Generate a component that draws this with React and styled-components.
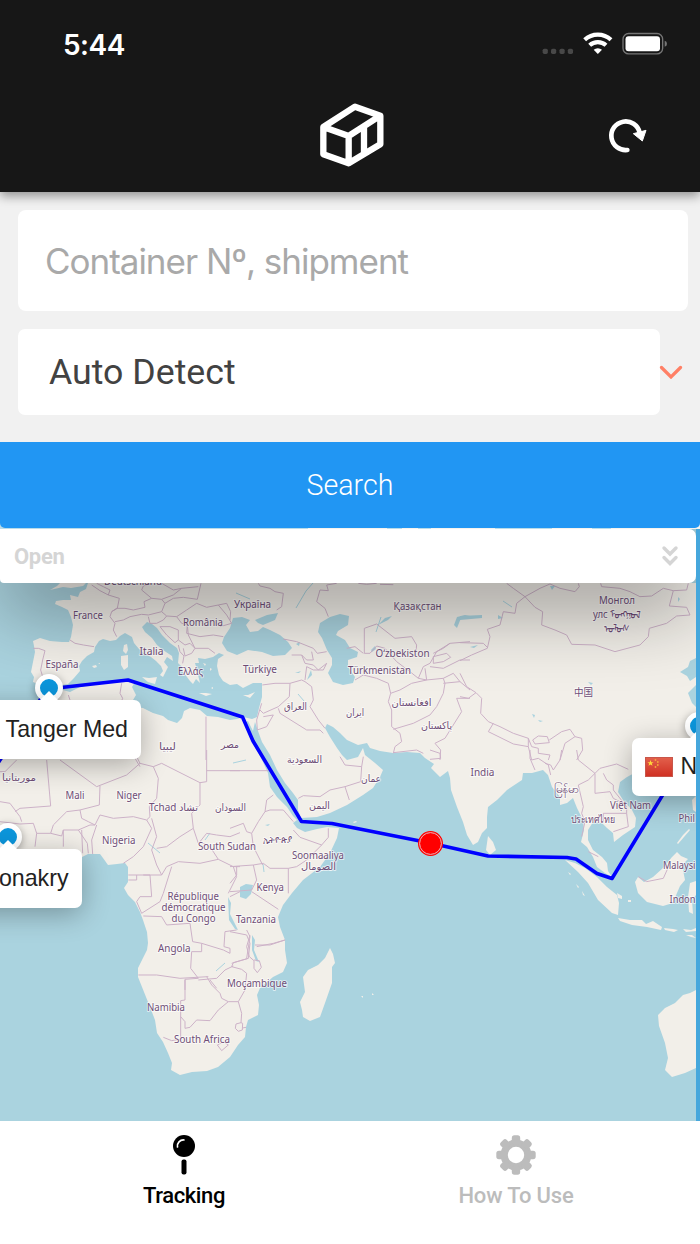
import React from 'react'
import styled, { createGlobalStyle } from 'styled-components';

const land = [
  // Europe, Asia and Africa
  'M88 583L86 589L80 592L78 597L70 595L71 600L63 600L56 601L55 604L62 607L68 610L71 617L73 625L71 637L69 642L62 642L50 641L40 638L33 641L34 646L35 652L33 662L31 672L34 677L33 682L38 684L48 688L55 686L68 684L74 678L80 671L79 666L82 661L87 656L94 652L95 647L99 641L103 639L110 641L116 640L120 636L125 633L132 637L134 643L139 649L145 654L151 657L156 661L161 666L163 671L160 675L163 677L166 671L168 667L164 662L167 657L173 661L172 656L163 650L157 645L152 638L145 632L142 627L147 622L152 624L157 628L162 635L170 643L177 648L179 653L178 663L182 667L183 672L187 677L190 681L193 684L196 679L200 683L198 675L203 674L197 670L195 663L199 663L198 658L205 659L213 657L219 653L224 655L218 659L217 666L219 675L223 681L230 685L237 684L243 688L253 683L262 683L262 697L259 708L257 717L252 719L243 717L237 719L230 720L218 717L207 716L200 710L190 708L184 711L182 718L177 723L168 720L163 716L153 713L143 708L135 707L133 700L136 695L132 687L135 682L130 680L123 682L113 682L100 683L80 687L70 692L63 690L50 693L42 700L30 712L20 725L15 740L0 755L-10 770L-10 845L20 862L50 872L66 862L82 857L88 854L100 854L103 858L108 865L117 864L125 863L128 867L128 875L128 882L124 888L128 895L135 902L140 912L143 920L147 932L148 943L147 950L143 958L138 968L138 977L142 987L150 1007L155 1020L157 1033L163 1042L168 1053L172 1063L171 1070L180 1075L192 1072L207 1071L218 1067L230 1057L238 1045L245 1037L246 1027L248 1020L258 1015L259 1005L257 995L260 988L273 977L283 972L287 963L285 950L285 940L280 927L278 917L283 905L292 893L303 880L320 867L330 853L337 838L339 828L327 827L317 829L305 832L297 828L293 823L297 820L293 816L287 807L277 797L270 787L268 773L262 760L256 748L249 735L244 723L248 721L253 731L255 722L258 731L262 742L270 755L277 770L285 783L293 793L298 800L298 810L301 818L317 817L330 813L347 805L363 795L373 788L380 777L383 770L375 763L365 755L363 748L358 757L347 760L342 755L337 748L330 737L325 728L327 724L333 727L340 733L347 740L358 745L367 743L370 748L380 751L393 753L407 752L420 753L425 758L434 764L431 768L440 777L448 771L450 778L451 790L457 807L463 822L467 835L473 845L478 842L482 833L487 828L487 817L488 807L497 800L507 790L522 780L523 773L532 773L543 770L548 775L552 787L560 797L560 805L567 803L573 798L577 808L583 820L584 830L581 842L587 847L593 857L597 867L605 873L612 877L608 871L607 863L602 857L593 850L588 840L588 830L593 822L602 823L607 828L613 833L614 842L623 835L635 827L636 818L632 810L623 800L618 792L620 782L627 777L640 770L670 762L696 748L696 707L692 703L688 693L696 685L696 677L690 681L687 676L680 672L688 667L690 661L696 658L696 583Z',
  // Great Britain
  'M50 590L57 586L60 583L86 583L83 586L71 588L63 587Z',
  // Mediterranean islands
  'M124 645L127 644L128 650L126 654L123 651Z', 'M121 656L128 655L128 667L124 670L121 665Z',
  'M142 677L149 678L157 677L155 684L148 682Z', 'M199 693L206 693L212 694L206 696Z', 'M243 695L248 695L255 692L250 698Z',
  'M92 666l4 -1l1 2l-3 1Z', 'M98 663l2 0l0 1Z', 'M203 663l3 1l-1 2Z', 'M210 668l2 1l-2 2Z', 'M211 688l2 -1l0 2Z',
  // Madagascar and Sri Lanka
  'M330 948L333 954L335 963L332 967L332 983L325 1003L320 1017L310 1021L303 1017L302 1010L300 1002L305 992L303 977L308 970L318 965L325 958Z',
  'M488 836L493 842L496 850L490 855L486 850Z',
  // Indonesia
  'M565 860L575 863L585 868L597 877L607 887L617 895L619 903L618 915L612 913L598 900L588 883L578 872Z',
  'M618 918L630 920L642 920L646 924L653 921L662 927L661 930L647 927L632 925L620 921Z',
  'M664 928l9 1l5 1l-4 2l-9 -2Z', 'M683 929l8 1l5 -2v3l-10 1Z', 'M686 935l6 0l4 3l-5 -1Z',
  'M677 852L681 856L688 859L682 865L685 880L680 886L677 893L673 903L663 906L647 902L638 893L635 882L638 877L644 882L653 877L663 868L672 857Z',
  'M690 883L696 881L696 895L692 900L693 914L689 912L688 897Z', 'M677 843l6 -8l6 -6l1 1l-6 7l-6 7Z', 'M692 800l4 -4v16l-3 -2Z',
  'M617 893l5 3l0 3l-4 -1Z', 'M628 900l3 0l0 2l-3 0Z', 'M568 872l3 2l-1 1Z', 'M576 884l3 3l-1 1Z', 'M582 891l3 5l-2 -1Z',
  // Australia
  'M696 990L690 993L683 995L675 1003L665 1008L658 1015L659 1026L665 1043L668 1058L665 1070L672 1077L685 1073L696 1068Z',
  'M353 822l3 -1l1 1l-3 1Z', 'M361 996l2 0l0 2Z', 'M372 993l2 2l-2 0Z',
];

const water = [
  'M233 618L230 628L224 637L222 643L227 651L237 655L248 650L262 652L273 656L285 655L292 648L288 642L280 635L270 630L263 627L258 631L250 632L246 625L250 620L242 617Z',
  'M255 620L267 615L278 613L275 620L263 625L258 623Z',
  'M330 617L340 614L349 616L348 625L338 631L336 635L345 640L350 648L358 652L357 657L348 660L348 667L355 677L353 683L343 685L333 682L328 673L332 665L332 658L327 650L322 638L318 632L320 623Z',
  'M240 887L246 884L253 885L251 894L246 899L240 897Z',
  'M228 897L231 903L230 914L238 930L235 929L229 920Z',
  'M252 935L255 940L254 950L259 962L256 961L252 950Z',
  'M454 625L457 617L465 615L470 616L461 618L457 628Z',
  'M371 650l4 -4l1 3l-4 3Z', 'M385 618l7 -2l-4 4l-10 5Z', 'M460 616l22 -1v3l-22 2Z', 'M550 586l5 0l-3 4Z',
  'M503 618l-5 -3l0 4Z', 'M296 644l4 -2l-1 4Z', 'M307 680l4 -10l1 5Z', 'M295 673l6 -2l-2 2Z', 'M588 682l5 1l-2 2Z', 'M470 647l8 -2l-4 3Z',
  'M265 825l5 -1l-2 2Z', 'M678 597l2 2l-2 3Z', 'M532 714l3 1l-1 3Z', 'M538 720l5 1l-3 1Z',
];

const rivers = 'M296 608L306 591L313 583M236 593L250 599M376 632L381 617M298 694L304 701M503 601L512 607M263 864L264 872M216 971L225 963M148 843L160 853M233 763L246 760M210 833L205 840';

// country borders, digitised per sheet at three units to the pixel
const sheets = [
  { x: 0, y: 520, d: 'M100 385L115 385L135 392L128 420L122 450L128 470L120 490M210 360L225 370L250 375L282 380M275 195L300 212L325 225L358 235L352 265L335 275L330 290L345 310L340 330L350 350M290 190L310 200L330 210L325 225M335 275L350 265L375 265L400 270L435 262L432 245L455 235L485 238L495 250L485 275L445 285L425 283L390 290L370 300L345 305M455 235L425 210L430 198L455 190M485 190L520 210L545 205L595 200M485 238L520 225L545 205M495 250L520 235L550 232L592 238L603 190M485 275L500 288L530 290L560 270L590 250L620 262L655 255L680 285L695 310L660 320M530 290L545 310L562 315L560 340L600 350L640 345L670 350M445 290L450 310L470 310L490 300L500 288M480 320L510 320L535 330L535 360L525 368L500 345ZM535 360L555 375L570 370L585 385L575 400L555 408L550 385M562 315L565 345L585 385L625 385L645 400M535 375L540 395L552 408L548 430M655 255L680 250L692 275L690 300M365 490L360 520L368 535L362 550M205 525L210 540M618 590L618 720M405 715L420 740' },
  { x: 230, y: 520, d: 'M85 190L90 198L120 205L135 215L160 220L155 260L140 270M320 190L290 195L295 212L270 210L260 245L285 265L295 290M385 190L410 193L440 190M450 193L490 194M160 357L200 365L250 385L262 400L290 395M185 405L215 405L230 420L250 420L245 395M215 405L225 430L250 435L265 450L290 430L280 450L250 450L230 440L225 480M97 495L135 490L180 490L215 480L225 485M180 490L178 530L145 560L100 580L90 570M145 565L150 580L230 630L270 630L280 640M100 590L130 585L110 620L82 630L80 600L95 550M225 485L245 500L250 540L240 560L265 600L285 625M403 400L403 325L440 312L495 355L545 350L560 375L558 395M403 400L420 400L440 378L465 385L500 425L540 455L565 475L590 480M350 385L375 380L400 400M375 480L400 465L440 475L475 490L482 520M482 520L475 545L485 570L485 620L510 640L515 665L495 680L490 700M482 520L510 510L545 490L590 480L640 475L645 490L640 520L620 560L600 585L550 610L490 628M565 475L580 440L600 430L620 395L660 370L720 365M600 440L640 445L690 420L720 420M610 410L650 400L662 412L640 425L610 430ZM590 480L585 445M660 370L640 385L610 400M720 535L680 535L695 575L670 615L645 655L615 670L632 690L630 720M640 490L690 485L720 510M640 475L670 460L690 485' },
  { x: 460, y: 520, d: 'M140 190L160 205L195 230L240 205L270 192L300 205L345 215L358 200L355 190M195 230L170 250L165 280L130 275L120 315L82 328L90 350L82 385L35 405L0 422M0 368L70 370L82 382M195 230L225 262L248 275L245 315L285 330L320 345L335 373L405 375L465 395L540 375L565 350L568 325L620 310L650 288L690 285L680 262L628 258L640 212L610 205L575 228L540 230L510 215L480 205L425 200L422 190M640 212L680 210L685 190M0 460L20 500L48 518L65 535L62 580L85 605L120 620L160 640L205 655L205 680L160 672L85 635L100 610M0 530L25 535L48 518M218 660L235 648L262 650L268 668L225 672ZM268 660L305 635L330 628L345 650L365 655L368 690L350 720M345 650L315 670L300 720M205 680L215 720M205 655L215 680L235 685L235 700L270 705L265 720' },
  { x: 0, y: 750, d: 'M0 65L15 65L50 30M140 30L152 168L60 175L45 185M0 155L30 160L60 200L65 215M0 215L60 222L100 220L110 250L105 290M180 30L290 110L380 75L420 40L405 10M420 40L460 50L485 40L600 98L600 165L575 190L580 235L595 280M300 108L298 165L240 180L200 185L160 225L152 250L110 250M152 250L185 258L190 240L235 240M240 180L245 205L265 215L285 225M190 240L190 290M245 240L248 310M235 240L262 280L265 310M290 225L275 270L278 312M235 240L270 225L285 225L300 195L340 205L400 200L440 210L450 200L448 170L470 145L475 85L460 50M440 210L455 235L430 290L400 320L370 340M455 205L470 260L455 300L470 345L485 375L385 375M580 235L540 260L500 290L470 295M485 375L500 350L535 335L600 340L655 328L630 290L600 275M655 328L700 350L720 350M385 390L410 390L410 375M430 375L450 375L455 440L420 440L410 455L425 490M515 350L490 430L480 455L425 490M430 498L485 500L500 525L570 520L578 575L605 580L605 605L575 605L572 655L595 685M415 675L470 675L540 685L625 680M605 580L670 600L690 610L690 595L672 590L675 545L710 540M620 0L620 95L600 98M620 62L720 62M600 275L620 250L650 255L690 260L720 248M700 350L710 380L685 430M690 440L720 425M555 720L555 688L595 685M630 690L650 715' },
  { x: 230, y: 750, d: 'M0 62L115 62M130 135L110 150L105 185L85 215L65 250L70 290L98 345M105 185L120 180L160 180L190 215M0 235L40 220L50 245L65 250M190 240L210 262L275 285L295 262L295 235M275 285L230 330L200 350L175 355L175 430M0 350L70 345L100 340L120 355L175 355M70 345L80 390L65 420L0 425M20 350L20 375L0 400M65 425L145 478M80 590L130 580L165 570M0 545L50 555L60 580L55 625L5 640M205 145L220 137L270 140L300 120L345 110L358 150M345 110L392 95L395 50L345 45L330 20M395 50L400 20M490 8L560 0M560 0L580 10M600 0L630 10L632 25L600 28' },
  { x: 460, y: 750, d: 'M210 0L210 25L225 60M215 30L235 25L265 45L272 75M305 0L300 30L280 60L272 45L255 40M350 0L355 30L405 70L385 90L355 105L370 170L365 190L375 215L365 260M405 70L420 55L470 42L505 58M405 70L405 130L450 125L460 145L480 155M430 70L440 90L460 105L460 120L500 170L500 190L430 190L430 215M500 190L505 230L460 245M385 305L415 320M535 380L560 395L610 385L628 345' },
  { x: 130, y: 930, d: 'M205 150L260 145L285 120L310 108M165 150L165 210L152 212L152 325M152 260L165 275L165 295L180 292L200 270L240 272L265 240L295 215L325 215L345 180L350 130L335 118L305 110L310 98L355 85M230 140L245 165L270 190L275 205L295 215M325 215L335 250L333 278M333 278L318 282L316 295L325 304L337 300L338 280ZM348 292L338 294M262 345L280 335L295 345L275 362ZM100 322L125 332L150 328M350 0L360 20L350 85M360 15L350 50L358 80L372 92L372 115L382 128L394 112L388 92L372 90M375 45L420 45L465 30' },
];

// [text, left, baseline, width]
const labels = [
  ['Deutschland', 104, 584.5, 58], ['France', 73, 618.5, 30], ['România', 183, 625.5, 40], ['Italia', 139.5, 655, 24],
  ['España', 45.5, 667.5, 33], ['Ελλάς', 178, 674.5, 25], ['Україна', 234, 607.5, 37], ['Қазақстан', 393.5, 610, 48],
  ["Oʻzbekiston", 375.5, 657, 54], ['Türkiye', 243, 673, 34], ['Türkmenistan', 348, 673.5, 63],
  ['العراق', 284, 710, 23], ['ایران', 346, 715.5, 18], ['افغانستان', 391.5, 706, 40], ['پاکستان', 421, 728.5, 31],
  ['Монгол', 599, 604, 36], ['улс ᠮᠣᠩᠭᠣᠯ', 593, 618, 48], ['ᠤᠯᠤᠰ', 604, 632, 26], ['中国', 574, 695.5, 19],
  ['ليبيا', 159, 750, 17], ['مصر', 221, 747.5, 18], ['موريتانيا', 2, 780.5, 34], ['Mali', 65.5, 799, 19], ['Niger', 116.5, 799, 25],
  ['Tchad تشاد', 149, 810.5, 49], ['السودان', 215, 810.5, 31], ['Nigeria', 102, 844, 33.5], ['South Sudan', 198, 850, 58],
  ['ኢትዮጵያ', 263, 843, 29], ['السعودية', 287, 763, 35], ['عمان', 361, 782, 20], ['اليمن', 309, 809, 21],
  ['Soomaaliya', 292, 858.5, 52], ['الصومال', 301, 869.5, 35], ['Kenya', 256.5, 891, 27.5], ['Tanzania', 236, 922.5, 40],
  ['République', 167.5, 900, 51.5], ['démocratique', 161.5, 910.5, 64], ['du Congo', 171.5, 921.5, 44], ['Angola', 158, 951.5, 32.5],
  ['Moçambique', 227, 987, 60], ['Namibia', 147, 1010.5, 38], ['South Africa', 174, 1042.5, 56],
  ['India', 470.5, 776, 24], ['မြန်မာ', 554, 793, 25], ['Việt Nam', 610, 809, 41], ['ประเทศไทย', 571, 823, 44],
  ['Phil', 678.5, 821.5, 16.5], ['Malaysi', 663, 868.5, 32.5], ['Indon', 669.5, 903, 26],
];

function MapTiles() {
  return (
    <Tiles viewBox="0 529 696 592">
      {land.map((d) => <path key={d} d={d} fill="#f2efe9" />)}
      {water.map((d) => <path key={d} d={d} fill="#aad3df" />)}
      <path d={rivers} fill="none" stroke="#aad3df" strokeWidth="1" />
      {sheets.map(({ x, y, d }) => (
        <path key={`${x}-${y}`} d={d} transform={`translate(${x} ${y}) scale(.3333)`} fill="none" stroke="#cdb2c8" strokeWidth="3" strokeLinejoin="round" />
      ))}
      {labels.map(([text, x, y, width]) => (
        <Label key={text} x={x} y={y} textLength={width} lengthAdjust="spacingAndGlyphs">{text}</Label>
      ))}
    </Tiles>
  )
}

function Route() {
  return (
    <Tiles viewBox="0 529 696 592">
      <path d="M-2 763L42 697L48 689L128 680L242.5 717L253 741L301.500 821.500L332 823.500L430 843L488 856L567 857.500L576 859L597 873.500L612 878.500L696 740" fill="none" stroke="#0000ff" strokeWidth="3.6" strokeLinejoin="round" />
      <circle cx="430.500" cy="843.500" r="11.700" fill="#f00" stroke="#f00" strokeWidth="1.600" />
      <circle cx="430.500" cy="843.500" r="10.900" fill="none" stroke="#e9b6bd" strokeWidth="1" />
    </Tiles>
  )
}

const teeth = [0, 45, 90, 135, 180, 225, 270, 315];

function Gear() {
  return (
    <svg width="40" height="40" viewBox="-20 -20 40 40">
      <circle r="11.800" fill="none" stroke="#bcbcbc" strokeWidth="7.200" />
      {teeth.map((a) => <rect key={a} x="-4.200" y="-19.700" width="8.400" height="9" rx="2.600" transform={`rotate(${a})`} fill="#bcbcbc" />)}
    </svg>
  )
}

function App() {
  return (
    <Screen>
      <GlobalStyle />
      <Header>
        <StatusBar>
          <Time>5:44</Time>
          <svg width="125" height="24" viewBox="725 98 375 72">
            {[727, 752, 777.5, 802.5].map((x) => <rect key={x} x={x} y="148" width="15.500" height="16" rx="5" fill="#484848" />)}
            <g fill="none" stroke="#fff" strokeWidth="12.500">
              <path d="M853 121.500A58 58 0 0 1 932 121.500" />
              <path d="M868 138A36 36 0 0 1 917 138" />
            </g>
            <path d="M880 151.500A19 19 0 0 1 905 151.500L892.500 164Z" fill="#fff" />
            <rect x="968" y="102.500" width="119" height="61" rx="17" fill="none" stroke="#757575" strokeWidth="4" />
            <rect x="975.500" y="110.500" width="103.500" height="45.500" rx="9" fill="#fff" />
            <path d="M1093 124Q1100 126 1100 133Q1100 140 1093 142Z" fill="#757575" />
          </svg>
        </StatusBar>
        <TitleBar>
          <Logo width="68" height="68" viewBox="55 301 204 204">
            <path d="M71 379L166 318L242 345V431L147 488L71 461ZM71 379L147 406L242 345M147 406V488M193 377V457" fill="none" stroke="#fff" strokeWidth="19" strokeLinejoin="round" />
          </Logo>
          <Reload width="42" height="38" viewBox="920 350 126 114">
            <path d="M981 449A43 43 0 1 1 1018 397" fill="none" stroke="#fff" strokeWidth="14" strokeLinecap="round" />
            <path d="M999 400L1037 390L1026 422Z" fill="#fff" stroke="#fff" strokeWidth="3" strokeLinejoin="round" />
          </Reload>
        </TitleBar>
      </Header>

      <Form>
        <Input placeholder="Container Nº, shipment" />
        <SelectRow>
          <Select>Auto Detect</Select>
          <svg width="24" height="14" viewBox="0 0 24 14">
            <path d="M2.500 2.500L12 12L21.500 2.500" fill="none" stroke="#ff8066" strokeWidth="3.200" strokeLinecap="round" />
          </svg>
        </SelectRow>
      </Form>
      <SearchArea>
        <Search>Search</Search>
      </SearchArea>

      <MapArea>
        <MapView>
          <MapTiles />
          <Panel>
            <span>Open</span>
            <svg width="18" height="22" viewBox="0 0 18 22">
              <path d="M3 3L9 9L15 3M3 12.500L9 18.500L15 12.500" fill="none" stroke="#d5d5d5" strokeWidth="3.400" strokeLinecap="round" />
            </svg>
          </Panel>
          <Route />
          <Pin $x={48.5} $y={159} />
          <Pin $x={8} $y={308} />
          <Pin $x={699} $y={197} />
          <Tooltip $x={48.5} $y={171} $w={185}>Tanger Med</Tooltip>
          <Tooltip $x={8} $y={320} $w={147}>onakry</Tooltip>
          <Tooltip $x={698.5} $y={208.5} $w={134} $start>
            <svg width="28" height="20" viewBox="0 0 28 20">
              <defs>
                <linearGradient id="flag" x1="0" y1="0" x2="0" y2="1">
                  <stop offset="0" stopColor="#e2604c" />
                  <stop offset="1" stopColor="#cf2f22" />
                </linearGradient>
              </defs>
              <rect x=".5" y=".5" width="27" height="19" fill="url(#flag)" stroke="#c8564a" />
              <path d="M5.500 3L6.300 5.200H8.600L6.800 6.600L7.500 8.800L5.500 7.500L3.500 8.800L4.200 6.600L2.400 5.200H4.700Z" fill="#ffd83b" />
              <g fill="#f5a83b">
                <circle cx="10.500" cy="3" r=".9" />
                <circle cx="12.800" cy="5" r=".9" />
                <circle cx="12.800" cy="8" r=".9" />
                <circle cx="10.500" cy="10" r=".9" />
              </g>
            </svg>
            N
          </Tooltip>
        </MapView>
      </MapArea>

      <Nav>
        <Tab $active>
          <svg width="24" height="40" viewBox="0 0 24 40">
            <circle cx="12" cy="11" r="11" />
            <path d="M5.500 12A6 6 0 0 1 12 5" fill="none" stroke="#fff" strokeWidth="1.700" strokeLinecap="round" />
            <rect x="9.500" y="24.500" width="5" height="15" rx="2" />
          </svg>
          Tracking
        </Tab>
        <Tab>
          <Gear />
          How To Use
        </Tab>
      </Nav>
    </Screen>
  )
}

const GlobalStyle = createGlobalStyle`
  *{
    box-sizing: border-box;
  }
  body{
    margin: 0;
    background: white;
  }
  svg{
    display: block;
    flex: none;
  }
`;

const Screen = styled.div`
  width: 700px;
  height: 1244px;
  display: flex;
  flex-direction: column;
  overflow: hidden;
  font-family: Roboto, sans-serif;
`;

const Header = styled.header`
  position: relative;
  z-index: 1;
  height: 192px;
  flex: none;
  background: #171717;
  box-shadow: 0 4px 10px rgba(0, 0, 0, 0.4);
`;

const StatusBar = styled.div`
  height: 88px;
  padding: 0 33px 0 63px;
  display: flex;
  align-items: center;
  justify-content: space-between;
`;

const Time = styled.div`
  color: white;
  font-family: Inter, sans-serif;
  font-size: 28px;
  font-weight: 600;
  letter-spacing: -0.5px;
  padding-top: 2px;
`;

const TitleBar = styled.div`
  height: 94px;
  padding: 0 51px 0 55px;
  display: grid;
  grid-template-columns: 1fr auto 1fr;
  align-items: center;
`;

const Logo = styled.svg`
  grid-column: 2;
`;

const Reload = styled.svg`
  grid-column: 3;
  justify-self: end;
  margin-top: 1px;
`;

const Form = styled.div`
  height: 249.5px;
  flex: none;
  padding: 18px 12px 0 18px;
  background: #f1f1f1;
`;

const Input = styled.input`
  display: block;
  width: 100%;
  height: 100.5px;
  padding: 2px 27px 0;
  border: none;
  border-radius: 8px;
  background: white;
  font-family: Inter, sans-serif;
  font-size: 35px;
  letter-spacing: -1.02px;

  &::placeholder{
    color: #a9a9a9;
    opacity: 1;
  }
`;

const SelectRow = styled.div`
  margin-top: 18px;
  display: flex;
  align-items: center;
`;

const Select = styled.div`
  width: 642px;
  height: 86px;
  padding-left: 31px;
  border-radius: 7px;
  background: white;
  color: #424242;
  font-size: 35.7px;
  line-height: 87px;

  & + svg{
    margin-left: -1.5px;
  }
`;

const SearchArea = styled.div`
  height: 87.5px;
  flex: none;
  background: linear-gradient(
    90deg,
    #b9dcea 308px, #f5f3ef 308px, #f5f3ef 387px,
    #b9dcea 387px, #b9dcea 402px, #f5f3ef 402px, #f5f3ef 418px,
    #b9dcea 418px, #b9dcea 431px, #f5f3ef 431px, #f5f3ef 495px,
    #b9dcea 495px, #b9dcea 552px, #f5f3ef 552px, #f5f3ef 592px,
    #b9dcea 592px, #b9dcea 611px, #f5f3ef 611px
  );
`;

const Search = styled.button`
  display: block;
  width: 100%;
  height: 86px;
  padding: 0;
  border: none;
  border-radius: 0 0 5px 5px;
  background: #2196f3;
  color: white;
  font-family: Roboto, sans-serif;
  font-size: 28.6px;
  font-weight: 300;
`;

const MapArea = styled.div`
  height: 592px;
  flex: none;
  padding-right: 4px;
  background: #46a7dc;
`;

const MapView = styled.div`
  position: relative;
  height: 100%;
  overflow: hidden;
  background: #aad3df;
`;

const Tiles = styled.svg`
  position: absolute;
  top: 0;
  left: 0;
  width: 696px;
  height: 592px;
`;

const Label = styled.text`
  fill: #6f4e77;
  stroke: rgba(255, 255, 255, 0.6);
  stroke-width: 2px;
  stroke-linejoin: round;
  paint-order: stroke;
  font-family: "Noto Sans", "DejaVu Sans", "Noto Sans CJK SC", sans-serif;
  font-size: 10px;
`;

const Panel = styled.div`
  position: relative;
  height: 54px;
  padding: 0 17px 0 14px;
  display: flex;
  align-items: center;
  justify-content: space-between;
  border-radius: 0 7px 7px 4px;
  background: white;
  box-shadow: 0 20px 80px rgba(0, 0, 0, 0.48);
  color: #d5d5d5;
  font-size: 22px;
  font-weight: 700;
  letter-spacing: -0.3px;
`;

const Pin = styled.div`
  position: absolute;
  left: ${(p) => p.$x - 14}px;
  top: ${(p) => p.$y - 14}px;
  width: 28px;
  height: 28px;
  border: 5px solid white;
  border-radius: 50%;
  background: #0c96dc;
  box-shadow: 0 2px 8px rgba(0, 0, 0, 0.35);
`;

const Tooltip = styled.div`
  position: absolute;
  left: ${(p) => p.$x - p.$w / 2}px;
  top: ${(p) => p.$y}px;
  width: ${(p) => p.$w}px;
  height: 58.5px;
  padding: 0 13px;
  display: flex;
  align-items: center;
  justify-content: ${(p) => (p.$start ? 'flex-start' : 'flex-end')};
  gap: 8px;
  border-radius: 7px;
  background: white;
  box-shadow: 0 6px 28px rgba(0, 0, 0, 0.3);
  color: #222;
  font-family: "Liberation Sans", Arial, sans-serif;
  font-size: 23.2px;
  white-space: nowrap;

  &::before{
    content: '';
    position: absolute;
    top: -9px;
    left: calc(50% - 9px);
    border: solid transparent;
    border-width: 0 9px 9px;
    border-bottom-color: white;
  }
`;

const Nav = styled.nav`
  height: 123px;
  padding: 13.5px 18px 0;
  display: flex;
  background: white;
`;

const Tab = styled.div`
  flex: 1;
  display: flex;
  flex-direction: column;
  align-items: center;
  gap: 8px;
  color: ${(p) => (p.$active ? '#000' : '#bcbcbc')};
  font-size: 22px;
  font-weight: 500;
  line-height: 26px;
  letter-spacing: ${(p) => (p.$active ? '-0.4px' : '-0.15px')};
`;

export default App
